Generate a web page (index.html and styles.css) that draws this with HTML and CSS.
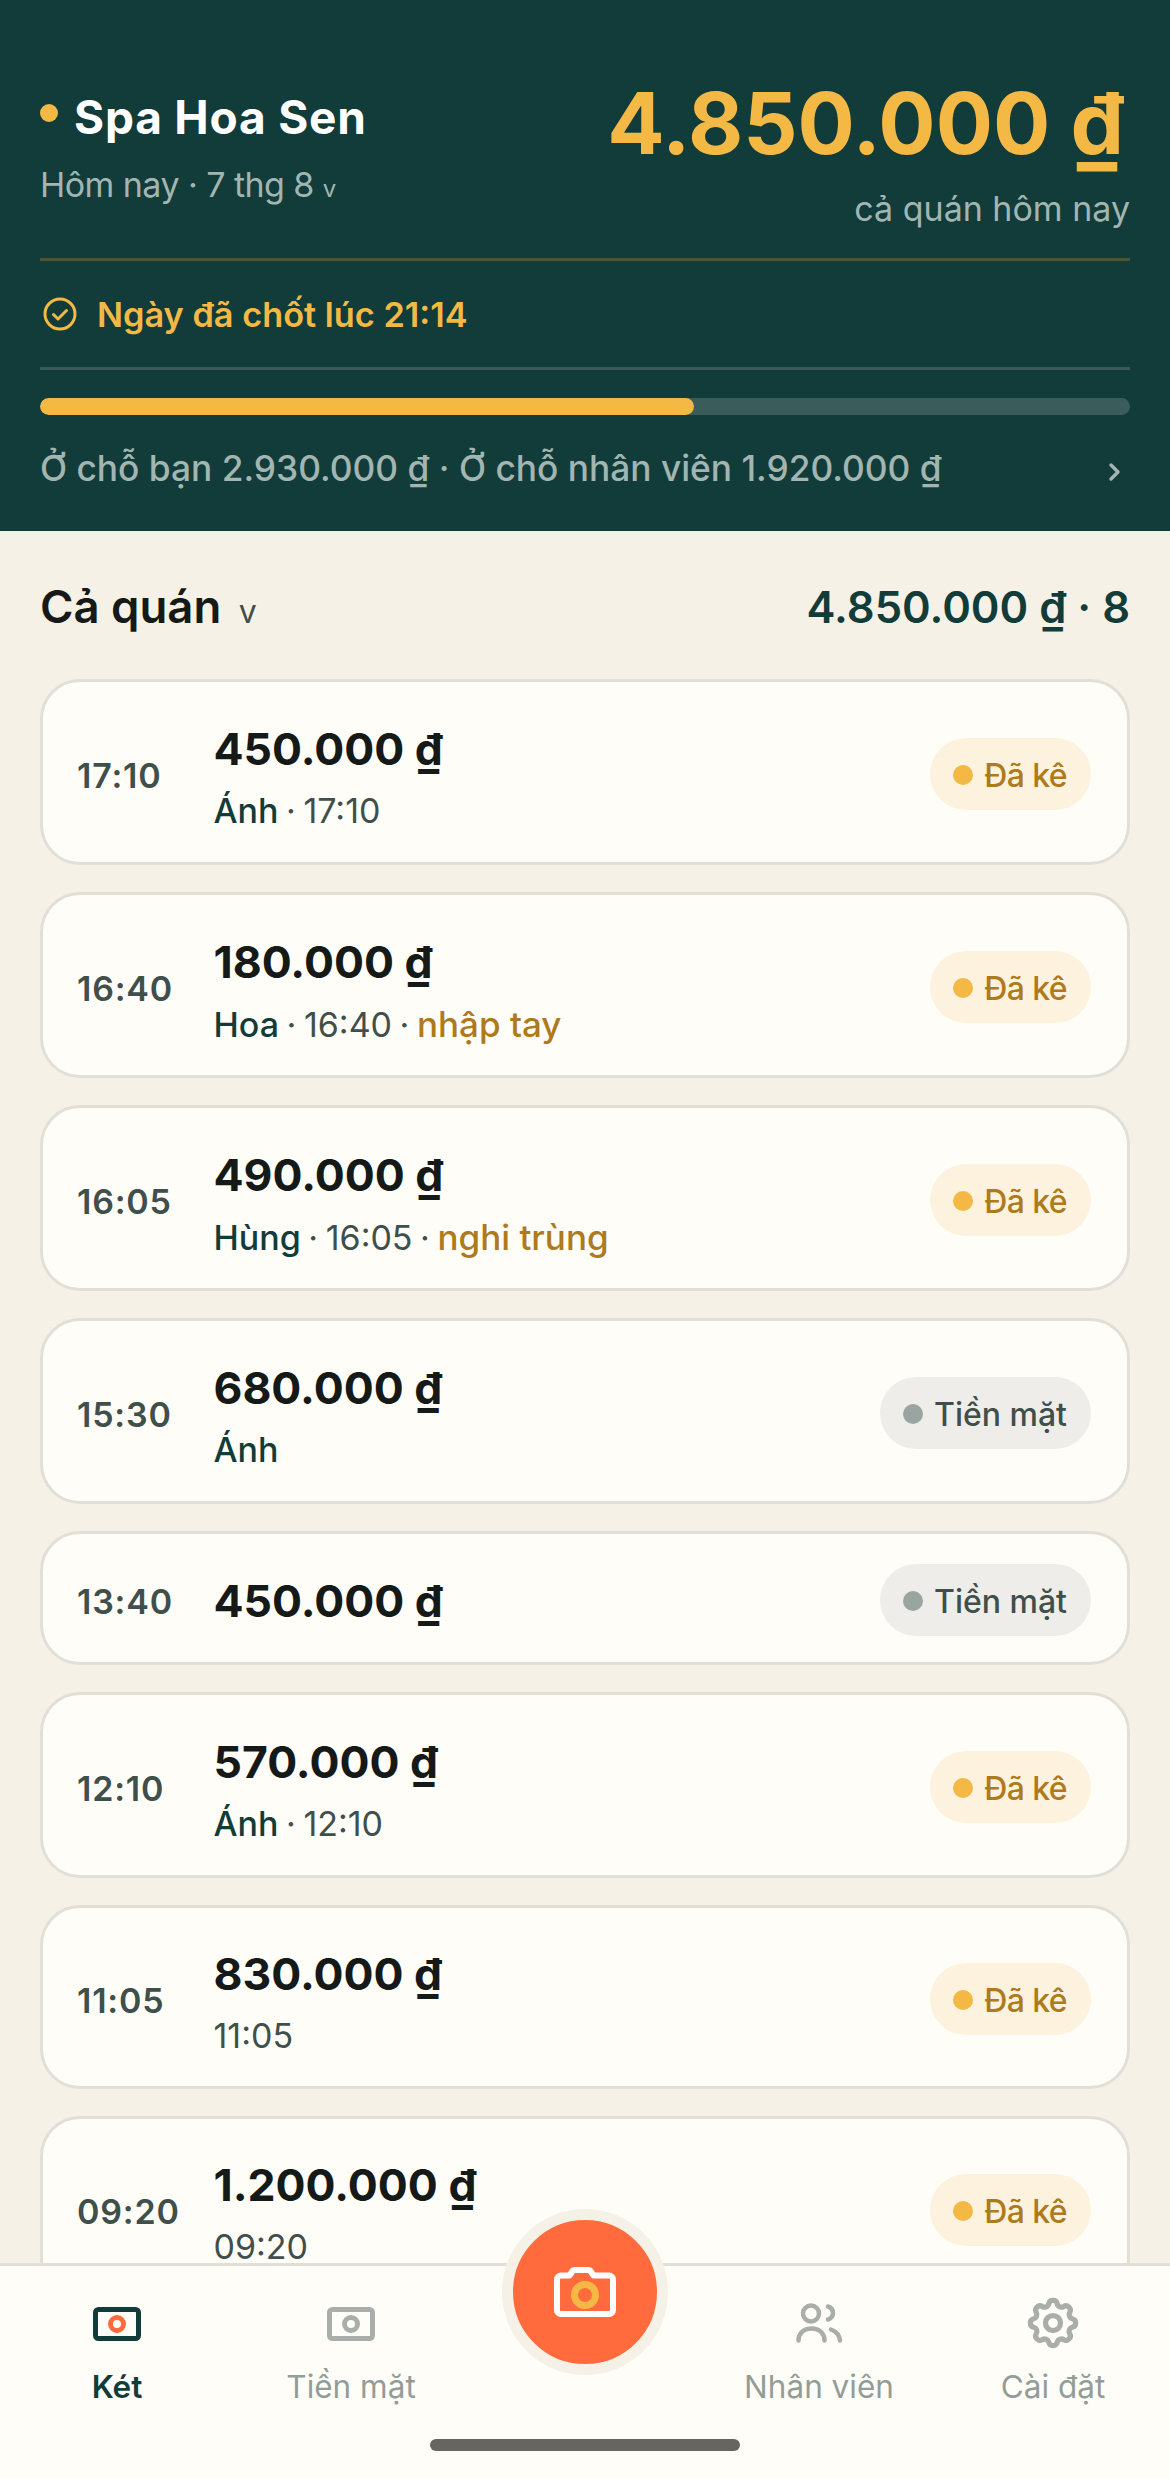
FILE: index.html
```html
<!DOCTYPE html>
<html lang="vi">
<head>
<meta charset="utf-8">
<title>Két</title>
<link rel="stylesheet" href="styles.css">
</head>
<body>
<div class="screen">
  <header class="top">
    <div class="top-row">
      <div>
        <div class="shop"><span class="shop-dot"></span>Spa Hoa Sen</div>
        <div class="date">Hôm nay · 7 thg 8 <span class="date-v">v</span></div>
      </div>
      <div class="total-box">
        <div class="total">4.850.000 ₫</div>
        <div class="total-note">cả quán hôm nay</div>
      </div>
    </div>
    <div class="closed">
      <svg class="closed-icon" viewBox="0 0 34 34" fill="none" stroke="#f3b944" stroke-width="3" stroke-linecap="round" stroke-linejoin="round"><circle cx="17" cy="17" r="15"/><path d="M10.500 17.500l4.500 4.500 8.500-8.500"/></svg>
      Ngày đã chốt lúc 21:14
    </div>
    <div class="bar"><div class="bar-fill" style="width:60%"></div></div>
    <div class="split">
      <span>Ở chỗ bạn 2.930.000 ₫ · Ở chỗ nhân viên 1.920.000 ₫</span>
      <svg class="split-arrow" viewBox="0 0 14 20" fill="none" stroke="#a3b5b1" stroke-width="3.400" stroke-linecap="round" stroke-linejoin="round"><path d="M3 3l7 7-7 7"/></svg>
    </div>
  </header>

  <main class="list">
    <div class="list-head">
      <div class="list-title">Cả quán <span class="list-v">v</span></div>
      <div class="list-sum">4.850.000 ₫ · 8</div>
    </div>

    <div class="card">
      <div class="time">17:10</div>
      <div class="info">
        <div class="amount">450.000 ₫</div>
        <div class="meta"><b>Ánh</b> · 17:10</div>
      </div>
      <div class="pill"><i></i>Đã kê</div>
    </div>
    <div class="card">
      <div class="time">16:40</div>
      <div class="info">
        <div class="amount">180.000 ₫</div>
        <div class="meta"><b>Hoa</b> · 16:40 · <em>nhập tay</em></div>
      </div>
      <div class="pill"><i></i>Đã kê</div>
    </div>
    <div class="card">
      <div class="time">16:05</div>
      <div class="info">
        <div class="amount">490.000 ₫</div>
        <div class="meta"><b>Hùng</b> · 16:05 · <em>nghi trùng</em></div>
      </div>
      <div class="pill"><i></i>Đã kê</div>
    </div>
    <div class="card">
      <div class="time">15:30</div>
      <div class="info">
        <div class="amount">680.000 ₫</div>
        <div class="meta"><b>Ánh</b></div>
      </div>
      <div class="pill cash"><i></i>Tiền mặt</div>
    </div>
    <div class="card short">
      <div class="time">13:40</div>
      <div class="info">
        <div class="amount">450.000 ₫</div>
      </div>
      <div class="pill cash"><i></i>Tiền mặt</div>
    </div>
    <div class="card">
      <div class="time">12:10</div>
      <div class="info">
        <div class="amount">570.000 ₫</div>
        <div class="meta"><b>Ánh</b> · 12:10</div>
      </div>
      <div class="pill"><i></i>Đã kê</div>
    </div>
    <div class="card bare">
      <div class="time">11:05</div>
      <div class="info">
        <div class="amount">830.000 ₫</div>
        <div class="meta">11:05</div>
      </div>
      <div class="pill"><i></i>Đã kê</div>
    </div>
    <div class="card bare">
      <div class="time">09:20</div>
      <div class="info">
        <div class="amount">1.200.000 ₫</div>
        <div class="meta">09:20</div>
      </div>
      <div class="pill"><i></i>Đã kê</div>
    </div>
  </main>

  <nav class="tabs">
    <div class="tab active">
      <svg class="tab-icon" viewBox="0 0 48 34" fill="none"><rect x="2.500" y="2.500" width="43" height="29" rx="3" stroke="#123c3a" stroke-width="5"/><circle cx="24" cy="17" r="6.500" stroke="#ff6b3d" stroke-width="5"/></svg>
      <span>Két</span>
    </div>
    <div class="tab">
      <svg class="tab-icon" viewBox="0 0 48 34" fill="none"><rect x="2.500" y="2.500" width="43" height="29" rx="3" stroke="#a9aeaa" stroke-width="5"/><circle cx="24" cy="17" r="6.500" stroke="#a9aeaa" stroke-width="5"/></svg>
      <span>Tiền mặt</span>
    </div>
    <div class="tab tab-gap"></div>
    <div class="tab">
      <svg class="tab-icon people" viewBox="0 0 47 40" fill="none" stroke="#a9aeaa" stroke-width="4.500" stroke-linecap="round"><circle cx="15" cy="10.500" r="8"/><path d="M2.500 37.500c0-7 5-12 13-12s13 5 13 12"/><path d="M32 3.500c3 1 5 3.500 5 6.500s-2 5.500-5 6.500"/><path d="M35 26.500c5 2 8.500 6 9 11"/></svg>
      <span>Nhân viên</span>
    </div>
    <div class="tab">
      <svg class="tab-icon gear" viewBox="0 0 24 24" fill="none" stroke="#a9aeaa" stroke-width="2.100" stroke-linecap="round" stroke-linejoin="round"><path d="M10.300 4.300c.4-1.800 3-1.800 3.400 0a1.700 1.700 0 0 0 2.600 1.100c1.500-.9 3.300.8 2.400 2.400a1.700 1.700 0 0 0 1 2.500c1.800.4 1.800 3 0 3.400a1.700 1.700 0 0 0-1 2.600c.9 1.500-.9 3.300-2.400 2.400a1.700 1.700 0 0 0-2.600 1c-.4 1.800-3 1.800-3.400 0a1.700 1.700 0 0 0-2.600-1c-1.500.9-3.300-.9-2.400-2.400a1.700 1.700 0 0 0-1-2.600c-1.800-.4-1.800-3 0-3.400a1.700 1.700 0 0 0 1-2.500c-.9-1.600.9-3.300 2.400-2.400a1.700 1.700 0 0 0 2.600-1.100z"/><circle cx="12" cy="12" r="3"/></svg>
      <span>Cài đặt</span>
    </div>
  </nav>
  <button class="snap">
    <svg class="snap-icon" viewBox="0 0 62 50" fill="none"><path d="M7 8.500h8.500l3-4.500c.4-.6.900-1 1.600-1h14.800c.7 0 1.200.4 1.600 1l3 4.500H55c2.200 0 4 1.800 4 4V43c0 2.200-1.800 4-4 4H7c-2.200 0-4-1.800-4-4V12.500c0-2.200 1.800-4 4-4z" stroke="#fff" stroke-width="6" stroke-linejoin="round"/><circle cx="31" cy="28" r="10.500" stroke="#f3b944" stroke-width="7"/></svg>
  </button>
  <div class="home-bar"></div>
</div>
</body>
</html>
```

FILE: styles.css
```css
*
{
	box-sizing : border-box;
}
html, body
{
	margin : 0;
	padding : 0;
}
body
{
	background-color : #f5f1e6;
	font-family : Inter, "Noto Sans", sans-serif;
	color : #151a18;
}
.screen
{
	position : relative;
	width : 1170px;
	height : 2479px;
	overflow : hidden;
}

/* top block */
.top
{
	height : 531px;
	padding : 72px 40px 0;
	background-color : #113c3a;
}
.top-row
{
	display : flex;
	justify-content : space-between;
	height : 189px;
	border-bottom : 3px solid #46563a;
}
.shop
{
	display : flex;
	align-items : center;
	margin-top : 18px;
	font-size : 46px;
	font-weight : 700;
	line-height : 54px;
	letter-spacing : 0.8px;
	color : #fff;
}
.shop-dot
{
	width : 18px;
	height : 18px;
	margin-right : 16px;
	margin-top : -8px;
	border-radius : 50%;
	background-color : #f3b944;
}
.date
{
	margin-top : 19px;
	font-size : 34px;
	line-height : 44px;
	letter-spacing : -0.55px;
	color : #a3b5b1;
}
.date-v
{
	font-size : 24px;
	margin-left : 0;
}
.total-box
{
	text-align : right;
}
.total
{
	font-size : 85px;
	font-weight : 700;
	line-height : 104px;
	margin-right : 6px;
	color : #f3b944;
}
.total-note
{
	margin-top : 11px;
	font-size : 34px;
	line-height : 44px;
	color : #a3b5b1;
}
.closed
{
	display : flex;
	align-items : center;
	height : 109px;
	border-bottom : 3px solid #39585a;
	font-size : 34.300px;
	font-weight : 600;
	color : #f3b944;
}
.closed-icon
{
	width : 34px;
	height : 34px;
	margin-left : 3px;
	margin-right : 20px;
}
.bar
{
	height : 17px;
	margin-top : 28px;
	border-radius : 9px;
	background-color : #3a5d5b;
	overflow : hidden;
}
.bar-fill
{
	height : 100%;
	border-radius : 9px;
	background-color : #f3b944;
}
.split
{
	display : flex;
	justify-content : space-between;
	align-items : center;
	margin-top : 31px;
	font-size : 35.300px;
	line-height : 46px;
	font-weight : 500;
	color : #a3b5b1;
}
.split-arrow
{
	width : 14px;
	height : 20px;
	margin-right : 8px;
	margin-top : 6px;
}

/* list */
.list
{
	padding : 0 40px;
}
.list-head
{
	display : flex;
	justify-content : space-between;
	align-items : center;
	height : 148px;
}
.list-title
{
	font-size : 45.500px;
	font-weight : 600;
	margin-top : 2px;
}
.list-v
{
	font-size : 32px;
	font-weight : 400;
	margin-left : 6px;
	color : #3f4f4b;
}
.list-sum
{
	font-size : 43.500px;
	font-weight : 600;
	margin-top : 4px;
	color : #123c3a;
}
.card
{
	display : flex;
	align-items : center;
	height : 186px;
	margin-bottom : 27px;
	padding : 0 36px 0 34px;
	border : 3px solid #e2dfd8;
	border-radius : 40px;
	background-color : #fffdf8;
}
.card.short
{
	height : 134px;
}
.card.bare
{
	height : 184px;
}
.time
{
	width : 136.500px;
	padding-top : 6px;
	font-size : 34px;
	font-weight : 600;
	letter-spacing : 0.8px;
	color : #3f4f4b;
}
.info
{
	flex : 1;
	padding-top : 11px;
}
.short .info
{
	padding-top : 6px;
}
.amount
{
	font-size : 44.500px;
	font-weight : 700;
	line-height : 54px;
}
.meta
{
	margin-top : 13px;
	font-size : 34px;
	line-height : 44px;
	word-spacing : -2px;
	color : #3f4f4b;
}
.meta b
{
	font-weight : 500;
	color : #123c3a;
}
.meta em
{
	font-style : normal;
	font-size : 35px;
	font-weight : 500;
	word-spacing : 0;
	color : #ae7a1c;
}
.pill
{
	display : flex;
	align-items : center;
	height : 72px;
	margin-top : 3px;
	padding : 3px 24px 0 23px;
	border-radius : 36px;
	background-color : #fdf2de;
	font-size : 32px;
	font-weight : 500;
	letter-spacing : -0.6px;
	color : #ae7a1c;
}
.pill i
{
	width : 20px;
	height : 20px;
	margin-right : 11px;
	border-radius : 50%;
	background-color : #f3b944;
}
.pill.cash
{
	background-color : #eeede9;
	letter-spacing : 0;
	color : #3f4f4b;
}
.pill.cash i
{
	background-color : #9aa5a2;
}

/* bottom tabs */
.tabs
{
	position : absolute;
	left : 0;
	right : 0;
	bottom : 0;
	height : 216px;
	display : grid;
	grid-template-columns : 234px 234px 234px 234px 234px;
	border-top : 3px solid #e2dfd8;
	background-color : #fffdf8;
}
.tab
{
	position : relative;
	text-align : center;
	font-size : 31.500px;
	color : #939d98;
}
.tab span
{
	position : absolute;
	left : 0;
	right : 0;
	top : 101px;
	line-height : 40px;
}
.tab.active
{
	font-weight : 600;
	color : #123c3a;
}
.tab-icon
{
	position : absolute;
	left : 93px;
	top : 41px;
	width : 48px;
	height : 34px;
}
.tab-icon.people
{
	left : 94px;
	top : 37px;
	width : 47px;
	height : 40px;
}
.tab-icon.gear
{
	left : 87px;
	top : 27px;
	width : 60px;
	height : 60px;
}
.snap
{
	position : absolute;
	left : 502px;
	top : 2209px;
	width : 166px;
	height : 166px;
	padding : 0;
	border : 11px solid #f5f1e6;
	border-radius : 50%;
	background-color : #ff6b3d;
}
.snap-icon
{
	display : block;
	width : 62px;
	height : 50px;
	margin : 0 auto;
}
.home-bar
{
	position : absolute;
	left : 430px;
	top : 2439px;
	width : 310px;
	height : 12px;
	border-radius : 6px;
	background-color : #666562;
}
```
